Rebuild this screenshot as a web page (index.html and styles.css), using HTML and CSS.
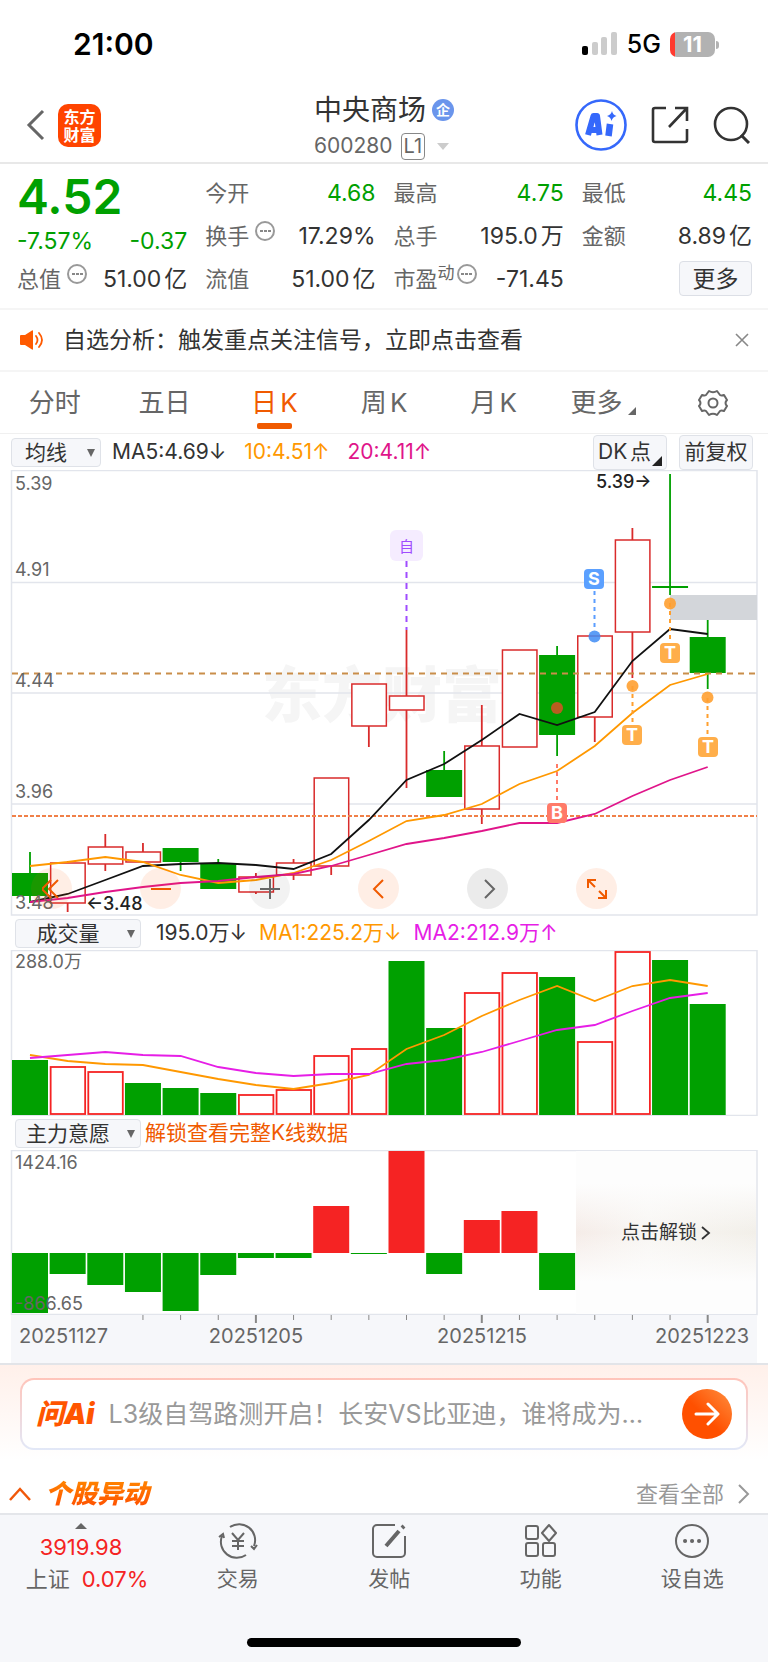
FILE: index.html
```html
<!DOCTYPE html>
<html lang="zh-CN">
<head>
  <meta charset="UTF-8">
  <meta name="viewport" content="width=device-width, initial-scale=1">
  <title>中央商场 600280</title>
  <link rel="stylesheet" href="styles.css">
</head>
<body>
  <div class="status-bar">
    <span class="time">21:00</span>
    <div class="status-right">
      <svg class="signal" width="36" height="24" viewBox="0 0 36 24">
        <rect x="0" y="14" width="6" height="9" rx="2" fill="#000"/>
        <rect x="10" y="10" width="6" height="13" rx="2" fill="#ccc"/>
        <rect x="19" y="5" width="6" height="18" rx="2" fill="#ccc"/>
        <rect x="29" y="0" width="6" height="23" rx="2" fill="#ccc"/>
      </svg>
      <span class="network">5G</span>
      <span class="battery">11</span>
    </div>
  </div>

  <header class="header">
    <div class="header-left">
      <button class="icon-btn" aria-label="返回">
        <svg width="20" height="32" viewBox="0 0 20 32"><path d="M17 2 3 16l14 14" fill="none" stroke="#666" stroke-width="3"/></svg>
      </button>
      <a class="logo" href="#">东方<br>财富</a>
    </div>
    <div class="header-title">
      <h1>中央商场<span class="corp">企</span></h1>
      <div class="code">600280 <span class="level">L1</span><span class="down"></span></div>
    </div>
    <div class="header-right">
      <button class="icon-btn" aria-label="Ai">
        <svg width="52" height="52" viewBox="0 0 52 52">
          <circle cx="26" cy="26" r="24.5" fill="#fff" stroke="#3568fb" stroke-width="2.6"/>
          <path d="m13 36 5.500-19h3.500l2.500 19M15.500 31h7" fill="none" stroke="#3568fb" stroke-width="6" stroke-linejoin="round"/>
          <path d="m35 25-1.500 12" stroke="#3568fb" stroke-width="6.500"/>
          <path d="M37 12q.8 4 4.500 5-4 1-5 5-.8-4-4.500-5 4-1 5-5z" fill="#3568fb"/>
        </svg>
      </button>
      <button class="icon-btn" aria-label="分享">
        <svg width="38" height="38" viewBox="0 0 38 38"><path d="M15 2H4a2 2 0 0 0-2 2v30a2 2 0 0 0 2 2h30a2 2 0 0 0 2-2V23M24 2h12v13M36 2 18 21" fill="none" stroke="#333" stroke-width="2.600"/></svg>
      </button>
      <button class="icon-btn" aria-label="搜索">
        <svg width="38" height="38" viewBox="0 0 38 38"><circle cx="18" cy="18" r="16" fill="none" stroke="#333" stroke-width="2.600"/><path d="m28 29 8 8" stroke="#333" stroke-width="3"/></svg>
      </button>
    </div>
  </header>

  <section class="quote">
    <div class="quote-col main-col">
      <div class="price">4.52</div>
      <div class="item change green"><span>-7.57%</span><span>-0.37</span></div>
      <div class="item"><span class="label">总值<i class="tip"></i></span><span>51.00亿</span></div>
    </div>
    <div class="quote-col">
      <div class="item"><span class="label">今开</span><span class="green">4.68</span></div>
      <div class="item"><span class="label">换手<i class="tip"></i></span><span>17.29%</span></div>
      <div class="item"><span class="label">流值</span><span>51.00亿</span></div>
    </div>
    <div class="quote-col">
      <div class="item"><span class="label">最高</span><span class="green">4.75</span></div>
      <div class="item"><span class="label">总手</span><span>195.0万</span></div>
      <div class="item"><span class="label">市盈<sup>动</sup><i class="tip"></i></span><span>-71.45</span></div>
    </div>
    <div class="quote-col">
      <div class="item"><span class="label">最低</span><span class="green">4.45</span></div>
      <div class="item"><span class="label">金额</span><span>8.89亿</span></div>
      <div class="item item-end"><button class="more-btn">更多</button></div>
    </div>
  </section>

  <div class="notice">
    <svg width="26" height="20" viewBox="0 0 26 20">
      <path d="M1 6q0-1 1-1h4l7-4.500q1-.5 1 .5v18q0 1-1 .5L6 15H2q-1 0-1-1z" fill="#ff5a00"/>
      <path d="M17 6q3 4 0 8M20 3q6 7 0 14" fill="none" stroke="#ff5a00" stroke-width="1.800" stroke-linecap="round"/>
    </svg>
    <a class="notice-text" href="#">自选分析：触发重点关注信号，立即点击查看</a>
    <button class="icon-btn" aria-label="关闭">
      <svg width="14" height="14" viewBox="0 0 14 14"><path d="m1 1 12 12M13 1 1 13" stroke="#888" stroke-width="1.600"/></svg>
    </button>
  </div>

  <nav class="tabs">
    <button class="tab">分时</button>
    <button class="tab">五日</button>
    <button class="tab active">日K</button>
    <button class="tab">周K</button>
    <button class="tab">月K</button>
    <button class="tab">更多<span class="corner"></span></button>
    <button class="tab" aria-label="设置">
      <svg width="30" height="28" viewBox="0 0 30 28">
        <path d="M11 2q4 2.500 8 0l3 4q1.500 1 4 0l3 5q-3 3 0 6l-3 5q-2.500-1-4 0l-3 4q-4-2.500-8 0l-3-4q-1.500-1-4 0l-3-5q3-3 0-6l3-5q2.500 1 4 0z" fill="none" stroke="#666" stroke-width="2" stroke-linejoin="round"/>
        <circle cx="15" cy="14" r="4.500" fill="none" stroke="#666" stroke-width="2"/>
      </svg>
    </button>
  </nav>

  <div class="toolbar toolbar-ma">
    <span class="picker picker-small"><select aria-label="主图指标"><option>均线</option></select></span>
    <span class="legend"><span>MA5:4.69↓</span><span class="orange">10:4.51↑</span><span class="pink">20:4.11↑</span></span>
    <button class="tool-btn tool-dk">DK点<span class="corner"></span></button>
    <button class="tool-btn">前复权</button>
  </div>

  <div class="chart-wrap">
    <svg class="chart" viewBox="0 0 768 446">
      <text x="262" y="247" class="watermark">东方财富</text>
      <path class="grid" d="M11.500.5h745.500v444.500H11.500zM12 112.500h745M12 223h745M12 334h745"/>
      <rect x="670" y="125" width="87" height="25" fill="#d3d6da"/>
      <g id="candles"></g>
      <path d="M12 203.500h745" stroke="#c98e4a" stroke-width="1.800" stroke-dasharray="6 5"/>
      <path d="M12 346h745" stroke="#f08048" stroke-width="1.800" stroke-dasharray="4 2"/>
      <g id="price-lines"></g>
      <g class="marks">
        <path d="M406.500 91v69" stroke="#a04cff" stroke-dasharray="6 5"/>
        <rect x="390" y="60" width="33" height="31" rx="6" fill="#f5ecff"/>
        <text x="406.500" y="82" class="mark-self">自</text>
        <path d="M594.500 121v40" stroke="#5b9dff" stroke-dasharray="4 4"/>
        <circle cx="594.500" cy="166.500" r="6" fill="#3f8cf5" opacity=".85"/>
        <rect x="584" y="99" width="20" height="20" rx="4" fill="#5ba0ff"/>
        <text x="594" y="115">S</text>
        <path d="M557 294v40" stroke="#ff7a68" stroke-dasharray="4 4"/>
        <circle cx="557" cy="238" r="6" fill="#b85d20"/>
        <rect x="547" y="333" width="20" height="20" rx="4" fill="#ff7a68"/>
        <text x="557" y="349">B</text>
        <path d="M670 133v40M632.500 216v39M707.500 228v39" stroke="#ff9f2e" stroke-dasharray="4 4"/>
        <g fill="#ffa031" opacity=".9">
          <circle cx="670" cy="133.500" r="6"/><circle cx="632.500" cy="216" r="6"/><circle cx="707.500" cy="227.500" r="6"/>
        </g>
        <g fill="#ffae4a">
          <rect x="660" y="173" width="20" height="20" rx="4"/><rect x="622" y="255" width="20" height="20" rx="4"/><rect x="698" y="267" width="20" height="20" rx="4"/>
        </g>
        <text x="670" y="189">T</text><text x="632" y="271">T</text><text x="708" y="283">T</text>
      </g>
      <g class="axis-text">
        <text x="15" y="20">5.39</text><text x="15" y="106">4.91</text><text x="15" y="217">4.44</text>
        <text x="15" y="328">3.96</text><text x="15" y="439">3.48</text>
      </g>
      <g class="peak-text"><text x="596" y="18">5.39→</text><text x="86" y="440">←3.48</text></g>
    </svg>
    <div class="chart-btns">
      <button class="round" aria-label="最左"><svg width="20" height="20" viewBox="0 0 20 20"><path d="M9 1 0 10l9 9M16 1l-9 9 9 9"/></svg></button>
      <button class="round" aria-label="缩小"><svg width="20" height="20" viewBox="0 0 20 20"><path d="M0 10h20"/></svg></button>
      <button class="round light" aria-label="放大"><svg width="20" height="20" viewBox="0 0 20 20"><path d="M0 10h20M10 0v20"/></svg></button>
      <button class="round" aria-label="左移"><svg width="20" height="20" viewBox="0 0 20 20"><path d="m14 1-9 9 9 9"/></svg></button>
      <button class="round gray" aria-label="右移"><svg width="20" height="20" viewBox="0 0 20 20"><path d="m7 1 9 9-9 9"/></svg></button>
      <button class="round" aria-label="全屏"><svg width="20" height="20" viewBox="0 0 20 20"><path d="M1 9V1h8M1 1l7 7M19 11v8h-8M19 19l-7-7"/></svg></button>
    </div>
  </div>

  <div class="toolbar">
    <span class="picker"><select aria-label="副图指标一"><option>成交量</option></select></span>
    <span class="legend legend-vol"><span>195.0万↓</span><span class="orange">MA1:225.2万↓</span><span class="violet">MA2:212.9万↑</span></span>
  </div>
  <svg class="chart" viewBox="0 0 768 166">
    <path class="grid" d="M11.500.5h745.500v165H11.500z"/>
    <g id="volumes"></g>
    <g id="volume-lines"></g>
    <text x="15" y="18" class="axis-text">288.0万</text>
  </svg>

  <div class="toolbar">
    <span class="picker"><select aria-label="副图指标二"><option>主力意愿</option></select></span>
    <a class="unlock-link" href="#">解锁查看完整K线数据</a>
  </div>
  <div class="chart-wrap">
    <svg class="chart" viewBox="0 0 768 213">
      <path class="grid" d="M11.500.5h745.500v164H11.500z"/>
      <rect x="11" y="165" width="746" height="48" fill="#f6f7fa"/>
      <g id="will"></g>
      <g id="ticks"></g>
      <g class="axis-text"><text x="15" y="19">1424.16</text><text x="15" y="160">-866.65</text></g>
      <g class="date-text">
        <text x="19" y="193">20251127</text><text x="256" y="193" text-anchor="middle">20251205</text>
        <text x="482" y="193" text-anchor="middle">20251215</text><text x="749" y="193" text-anchor="end">20251223</text>
      </g>
    </svg>
    <button class="lock">点击解锁<svg width="10" height="16" viewBox="0 0 10 16"><path d="m1 2 7 6-7 6" fill="none" stroke="#333" stroke-width="1.800"/></svg></button>
  </div>

  <section class="ask">
    <form class="ask-box">
      <label class="ask-logo" for="ask-input">问Ai</label>
      <input type="text" id="ask-input" placeholder="L3级自驾路测开启！长安VS比亚迪，谁将成为…">
      <button type="button" class="send" aria-label="发送">
        <svg width="26" height="24" viewBox="0 0 26 24"><path d="M2 12h21M14 2l10 10-10 10" fill="none" stroke="#fff" stroke-width="3" stroke-linecap="round" stroke-linejoin="round"/></svg>
      </button>
    </form>
    <div class="moves">
      <svg width="22" height="14" viewBox="0 0 22 14"><path d="M1 13 11 2l10 11" fill="none" stroke="#f0580a" stroke-width="2.500"/></svg>
      <h2>个股异动</h2>
      <a href="#">查看全部<svg width="12" height="20" viewBox="0 0 12 20"><path d="m1 1 9 9-9 9" fill="none" stroke="#999" stroke-width="2"/></svg></a>
    </div>
  </section>

  <footer class="footer">
    <nav class="bottom-nav">
      <a class="index" href="#">
        <span class="up"></span>
        <span class="red">3919.98</span>
        <span class="index-change">上证<span class="red">0.07%</span></span>
      </a>
      <a class="nav-item" href="#">
        <svg width="40" height="36" viewBox="0 0 40 36"><path d="M12 4a16 16 0 0 1 24 19M28 32A16 16 0 0 1 4 13M1 14l4-3 1 4M39 22l-3 4-3-3M14 10l6 7 6-7M20 17v10M14 18h12M14 23h12"/></svg>
        交易
      </a>
      <a class="nav-item" href="#">
        <svg width="40" height="36" viewBox="0 0 40 36"><path d="M26 2H8a4 4 0 0 0-4 4v24a4 4 0 0 0 4 4h24a4 4 0 0 0 4-4V13"/><path d="m17 23 13-15M33 5l2-2" stroke-width="4"/></svg>
        发帖
      </a>
      <a class="nav-item" href="#">
        <svg width="40" height="36" viewBox="0 0 40 36"><rect x="5" y="3" width="12" height="13" rx="2"/><rect x="5" y="20" width="12" height="13" rx="2"/><rect x="22" y="20" width="12" height="13" rx="2"/><path d="m28 2 7 8-7 8-7-8z" stroke-linejoin="round"/></svg>
        功能
      </a>
      <a class="nav-item" href="#">
        <svg width="40" height="36" viewBox="0 0 40 36"><circle cx="20" cy="18" r="16"/><path d="M13 18h.1M20 18h.1M27 18h.1" stroke-width="4" stroke-linecap="round"/></svg>
        设自选
      </a>
    </nav>
    <div class="home-bar"></div>
  </footer>
  <script src="script.js"></script>
</body>
</html>
```
FILE: styles.css
```css
* {
  box-sizing: border-box;
}

body {
  margin: 0;
  background-color: #fff;
  color: #333;
  font-family: Inter, "Noto Sans CJK SC", sans-serif;
  font-size: 22px;
  line-height: 32px;
}

button,
select,
input {
  margin: 0;
  padding: 0;
  border: none;
  background: none;
  color: inherit;
  font: inherit;
}

a {
  color: inherit;
  text-decoration: none;
}

svg {
  display: block;
}

.green { color: #00a000; }
.orange { color: #ff9800; }
.pink { color: #e0158a; }
.violet { color: #e61ee6; }
.red { color: #f52323; }

/* status bar */
.status-bar {
  display: flex;
  justify-content: space-between;
  align-items: center;
  height: 88px;
  padding: 0 53px 0 73px;
}

.time {
  color: #000;
  font-size: 30px;
  font-weight: 600;
}

.status-right {
  display: flex;
  align-items: center;
  gap: 9px;
}

.network {
  color: #000;
  font-size: 25px;
  font-weight: 500;
}

.battery {
  position: relative;
  width: 45px;
  height: 25px;
  border-radius: 7px;
  background: linear-gradient(to right, #ff3b30 5px, #b2b2b2 5px);
  color: #fff;
  font-size: 22px;
  font-weight: 700;
  line-height: 25px;
  text-align: center;
}

.battery::after {
  content: "";
  position: absolute;
  right: -4px;
  top: 9px;
  width: 3px;
  height: 8px;
  border-radius: 0 3px 3px 0;
  background-color: #b2b2b2;
}

/* header */
.header {
  display: grid;
  grid-template-columns: 1fr auto 1fr;
  align-items: center;
  height: 76px;
  padding: 0 17px;
  border-bottom: 2px solid #e8e8e8;
}

.header-left,
.header-right {
  display: flex;
  align-items: center;
}

.header-left {
  gap: 12px;
  padding-left: 9px;
}

.header-right {
  justify-content: flex-end;
  gap: 24px;
}

.icon-btn {
  cursor: pointer;
}

.logo {
  padding: 4px 0;
  width: 43px;
  height: 43px;
  border-radius: 10px;
  background-color: #ff4400;
  color: #fff;
  font-size: 16px;
  font-weight: 600;
  line-height: 18px;
  text-align: center;
}

.header-title {
  padding-top: 2px;
}

h1 {
  display: flex;
  align-items: center;
  gap: 6px;
  margin: 0;
  font-size: 28px;
  font-weight: 400;
  line-height: 40px;
}

.corp {
  width: 22px;
  height: 22px;
  border-radius: 50%;
  background-color: #6a95ec;
  color: #fff;
  font-size: 14px;
  font-weight: 700;
  line-height: 21px;
  text-align: center;
}

.code {
  display: flex;
  align-items: center;
  color: #666;
  font-size: 21px;
  line-height: 32px;
}

.level {
  margin-left: 8px;
  padding: 0 2px;
  border: 1px solid #888;
  border-radius: 4px;
  font-size: 20px;
  line-height: 25px;
}

.down {
  margin-left: 12px;
  border: 6px solid transparent;
  border-top: 7px solid #ccc;
  border-bottom: none;
}

/* quote */
.quote {
  display: grid;
  grid-template-columns: repeat(4, 1fr);
  gap: 18px;
  padding: 7px 16px 8px 17px;
  border-bottom: 2px solid #f5f5f5;
  font-size: 23px;
  text-autospace: normal;
}

.quote-col {
  display: grid;
  grid-template-rows: repeat(3, 43px);
}

.main-col {
  grid-template-rows: 48px 38px 43px;
}

.price {
  color: #00a000;
  font-size: 48px;
  font-weight: 600;
  line-height: 52px;
}

.item {
  display: flex;
  justify-content: space-between;
  align-items: center;
  white-space: nowrap;
}

.change {
  align-items: flex-end;
}

.item-end {
  justify-content: flex-end;
}

.label {
  display: flex;
  color: #666;
  font-size: 22px;
}

.label sup {
  font-size: 17px;
  line-height: 20px;
}

.tip {
  display: flex;
  align-items: center;
  justify-content: center;
  width: 20px;
  height: 20px;
  margin: 1px 0 0 6px;
  border: 2px solid #999;
  border-radius: 50%;
}

.label sup + .tip {
  margin-left: 2px;
}

.tip::before {
  content: "";
  width: 11px;
  height: 2px;
  background: repeating-linear-gradient(to right, #888 0 3px, transparent 3px 4px);
}

.more-btn {
  width: 73px;
  height: 35px;
  border: 1px solid #dcdfe6;
  border-radius: 4px;
  background-color: #f6f7fa;
}

/* notice */
.notice {
  display: flex;
  align-items: center;
  height: 62px;
  padding: 0 19px;
  border-bottom: 2px solid #f5f5f5;
  font-size: 23px;
}

.notice-text {
  flex: 1;
  margin-left: 18px;
}

/* tabs */
.tabs {
  display: grid;
  grid-template-columns: repeat(7, 1fr);
  height: 62px;
  border-bottom: 1px solid #f0f0f0;
}

.tab {
  display: flex;
  justify-content: center;
  align-items: center;
  position: relative;
  color: #666;
  font-size: 26px;
  text-autospace: normal;
}

.tab.active {
  color: #f05a00;
}

.tab.active::after {
  content: "";
  position: absolute;
  bottom: 4px;
  width: 35px;
  height: 6px;
  border-radius: 2px;
  background-color: #f05a00;
}

.corner {
  align-self: flex-end;
  border-left: 8px solid transparent;
  border-bottom: 8px solid #666;
}

.tab .corner {
  margin: 0 0 18px 6px;
}

/* toolbars */
.toolbar {
  display: flex;
  align-items: center;
  height: 34px;
  padding: 0 15px;
  font-size: 21px;
}

.toolbar-ma {
  height: 36px;
  padding: 0 15px 0 11px;
}

.picker {
  position: relative;
  width: 126px;
}

.picker-small {
  width: 90px;
}

.picker::after {
  content: "";
  position: absolute;
  right: 6px;
  top: 11px;
  border: 4px solid transparent;
  border-top: 8px solid #666;
  border-bottom: none;
  pointer-events: none;
}

.picker select {
  display: block;
  width: 100%;
  height: 29px;
  padding-right: 20px;
  border: 1px solid #dfe2e8;
  border-radius: 4px;
  background-color: #f6f7fa;
  line-height: 27px;
  text-align-last: center;
  appearance: none;
}

.legend {
  display: flex;
  flex: 1;
  gap: 18px;
  margin-left: 11px;
}

.legend-vol {
  gap: 12px;
  margin-left: 15px;
}

.tool-btn {
  display: flex;
  justify-content: center;
  align-items: center;
  position: relative;
  width: 74px;
  height: 35px;
  margin-left: 12px;
  border: 1px solid #dfe2e8;
  border-radius: 4px;
  background-color: #f6f7fa;
  text-autospace: normal;
}

.tool-dk {
  justify-content: flex-start;
  padding-left: 4px;
}

.tool-btn .corner {
  position: absolute;
  right: 4px;
  bottom: 3px;
  border-left-width: 10px;
  border-bottom: 10px solid #222;
}

.unlock-link {
  margin-left: 4px;
  color: #f05a00;
}

/* charts */
.chart-wrap {
  position: relative;
}

.chart {
  width: 100%;
  height: auto;
}

.grid {
  fill: none;
  stroke: #e2e5ec;
  stroke-width: 1.5;
}

.up-candle {
  fill: #fff;
  stroke: #d92b2b;
  stroke-width: 1.5;
}

.up-volume {
  fill: #fff;
  stroke: #f52323;
  stroke-width: 1.8;
}

.down-bar { fill: #00a000; }
.up-bar { fill: #f52323; }

.line {
  fill: none;
  stroke-width: 1.8;
}

.watermark {
  fill: #f5f5f5;
  font-size: 60px;
  font-weight: 900;
}

.axis-text {
  fill: #666;
  font-size: 18px;
}

.peak-text {
  fill: #222;
  font-size: 18px;
  font-weight: 500;
}

.date-text {
  fill: #666;
  font-size: 20px;
}

.marks path {
  stroke-width: 2;
}

.marks text {
  fill: #fff;
  font-size: 18px;
  font-weight: 700;
  text-anchor: middle;
}

.marks .mark-self {
  fill: #a04cff;
  font-size: 15px;
  font-weight: 400;
}

.chart-btns {
  display: flex;
  gap: 68px;
  position: absolute;
  left: 31px;
  bottom: 7px;
}

.round {
  display: flex;
  justify-content: center;
  align-items: center;
  width: 41px;
  height: 41px;
  border-radius: 50%;
  background-color: rgba(255, 90, 0, 0.1);
}

.round path {
  fill: none;
  stroke: #f05a00;
  stroke-width: 2;
}

.round.light { background-color: rgba(0, 0, 0, 0.05); }
.round.gray { background-color: rgba(0, 0, 0, 0.08); }

.round.light path,
.round.gray path {
  stroke: #666;
}

.lock {
  display: flex;
  justify-content: center;
  align-items: center;
  gap: 4px;
  position: absolute;
  left: 75%;
  right: 12px;
  top: 1px;
  height: 163px;
  background: linear-gradient(to bottom, #fdfdfd 20%, transparent 50%, #fdfdfd 80%), linear-gradient(to right, #f5ece8, #f8f6f3 40%, #f2efe9);
  font-size: 19px;
}

/* ask ai */
.ask {
  padding: 13px 20px 0;
  border-top: 2px solid #e2e4e8;
  background: linear-gradient(to bottom, #fff0ea, #fff 95px);
}

.ask-box {
  display: flex;
  align-items: center;
  height: 72px;
  padding: 0 14px;
  border: 2px solid transparent;
  border-radius: 14px;
  background: linear-gradient(#fff, #fff) padding-box, linear-gradient(to bottom, #ffc4ba, #e2e8f8) border-box;
}

.ask-logo {
  color: #ff5500;
  font-size: 28px;
  font-style: italic;
  font-weight: 900;
}

.ask-box input {
  flex: 1;
  min-width: 0;
  height: 40px;
  margin-left: 14px;
  font-size: 25px;
}

.ask-box input::placeholder {
  color: #999;
}

.send {
  display: flex;
  justify-content: center;
  align-items: center;
  width: 50px;
  height: 50px;
  border-radius: 50%;
  background: linear-gradient(45deg, #ff5000 45%, #ff9040);
}

.moves {
  display: flex;
  align-items: center;
  height: 63px;
  margin: 0 -2px 0 -11px;
  padding-top: 24px;
}

.moves h2 {
  flex: 1;
  margin: 0 0 0 14px;
  background: linear-gradient(to bottom, #ff8a00, #ff4a00);
  background-clip: text;
  color: transparent;
  font-size: 26px;
  font-style: italic;
  font-weight: 900;
}

.moves a {
  display: flex;
  align-items: center;
  gap: 14px;
  color: #999;
}

/* bottom navigation */
.footer {
  height: 149px;
  padding-top: 8px;
  border-top: 2px solid #e4e6ea;
  background-color: #f6f7fa;
}

.bottom-nav {
  display: grid;
  grid-template-columns: 162px repeat(4, 1fr);
  color: #666;
}

.index,
.nav-item {
  display: flex;
  flex-direction: column;
  align-items: center;
}

.index-change {
  display: flex;
  gap: 12px;
  padding-left: 12px;
}

.nav-item {
  gap: 4px;
  font-size: 21px;
}

.nav-item svg {
  fill: none;
  stroke: #666;
  stroke-width: 2;
}

.up {
  margin-bottom: 2px;
  border: 6px solid transparent;
  border-top: none;
  border-bottom: 6px solid #666;
}

.home-bar {
  width: 274px;
  height: 9px;
  margin: 43px auto 0;
  border-radius: 5px;
  background-color: #000;
}
```
FILE: script.js
```js
const FIRST = 30;
const STEP = 37.65;

// [rise, high, top, bottom, low]
const candles = [
  [0, 382, 403, 426, 433], [1, 391, 393, 433, 442], [1, 364, 377, 394, 401], [1, 373, 382, 392, 393],
  [0, 378, 378, 392, 401], [0, 389, 393, 419, 419], [1, 403, 407, 422, 424], [1, 389, 393, 405, 410],
  [1, 308, 308, 396, 405], [1, 214, 214, 256, 277], [1, 160, 226, 240, 318], [0, 281, 300, 327, 327],
  [1, 235, 276, 339, 354], [1, 180, 180, 277, 277], [0, 176, 185, 265, 286], [1, 166, 166, 247, 272],
  [1, 58, 70, 162, 208], [0, 4, 116, 118, 125], [0, 150, 167, 203, 219]
];
const ma5 = [432, 424, 410, 396, 394, 393, 395, 399, 384, 350, 310, 294, 270, 244, 255, 242, 191, 159, 164];
const ma10 = [396, 392, 387, 392, 405, 413, 410, 403, 390, 371, 351, 345, 334, 314, 301, 276, 243, 215, 204];
const ma20 = [432, 428, 422, 417, 413, 411, 407, 404, 396, 385, 374, 368, 361, 353, 353, 344, 326, 310, 297];

// [rise, top]
const volumes = [
  [0, 110], [1, 117], [1, 122], [0, 133], [0, 138], [0, 143], [1, 145], [1, 140], [1, 106], [1, 99],
  [0, 11], [0, 78], [1, 43], [1, 23], [0, 27], [1, 92], [1, 2], [0, 10], [0, 54]
];
const vol1 = [105, 111, 114, 115, 122, 129, 135, 139, 133, 125, 99, 85, 66, 50, 36, 51, 36, 30, 36];
const vol2 = [108, 105, 102, 105, 106, 117, 123, 126, 124, 124, 114, 110, 102, 91, 80, 75, 61, 48, 43];

const will = [163, 124, 135, 142, 161, 125, 108, 108, 56, 104, 1, 124, 70, 61, 140];
const ZERO = 103;

function x(i) {
  return FIRST + i * STEP;
}

function draw(id, html) {
  document.getElementById(id).innerHTML = html;
}

function line(values, color) {
  const points = values.map((v, i) => x(i) + ',' + v).join(' ');
  return `<polyline class="line" stroke="${color}" points="${points}"/>`;
}

draw('candles', candles.map(([rise, high, top, bottom, low], i) => {
  const color = rise ? '#d92b2b' : '#00a000';
  const wick = `<path stroke="${color}" stroke-width="1.8" d="M${x(i)} ${high}V${top}M${x(i)} ${bottom}V${low}"/>`;
  const body = rise
    ? `<rect class="up-candle" x="${x(i) - 17}" y="${top}" width="34.5" height="${bottom - top}"/>`
    : `<rect class="down-bar" x="${x(i) - 18}" y="${top}" width="36" height="${bottom - top}"/>`;
  return wick + body;
}).join(''));
draw('price-lines', line(ma5, '#111') + line(ma10, '#ff9800') + line(ma20, '#e0158a'));

draw('volumes', volumes.map(([rise, top], i) => rise
  ? `<rect class="up-volume" x="${x(i) - 17}" y="${top}" width="34.5" height="${164 - top}"/>`
  : `<rect class="down-bar" x="${x(i) - 18}" y="${top}" width="36" height="${165 - top}"/>`).join(''));
draw('volume-lines', line(vol1, '#ff9800') + line(vol2, '#e61ee6'));

draw('will', will.map((y, i) =>
  `<rect class="${y < ZERO ? 'up-bar' : 'down-bar'}" x="${x(i) - 18}" y="${Math.min(y, ZERO)}" width="36" height="${Math.abs(y - ZERO)}"/>`).join(''));

let ticks = '';
for (let i = 3; i < 19; i++) {
  const major = i % 6 === 0;
  ticks += `<path stroke="#888" stroke-width="${major ? 2 : 1}" d="M${x(i)} 165v${major ? 8 : 5}"/>`;
}
draw('ticks', ticks);
```
